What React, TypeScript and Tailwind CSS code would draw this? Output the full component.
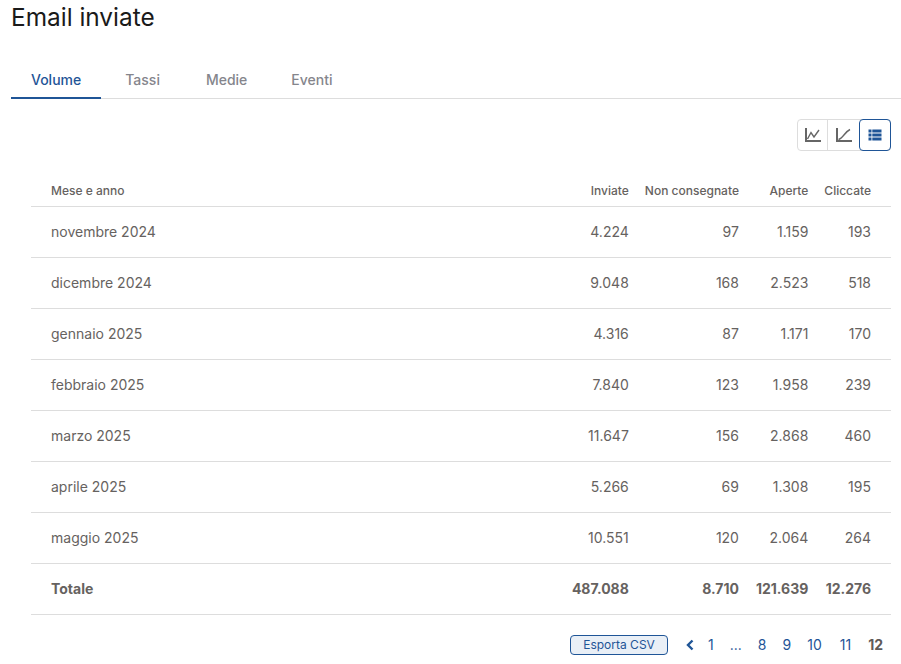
const rows = [
  ['novembre 2024', '4.224', '97', '1.159', '193'],
  ['dicembre 2024', '9.048', '168', '2.523', '518'],
  ['gennaio 2025', '4.316', '87', '1.171', '170'],
  ['febbraio 2025', '7.840', '123', '1.958', '239'],
  ['marzo 2025', '11.647', '156', '2.868', '460'],
  ['aprile 2025', '5.266', '69', '1.308', '195'],
  ['maggio 2025', '10.551', '120', '2.064', '264'],
];

function LineIcon() {
  return (
    <svg width="18" height="18" viewBox="0 0 18 18" fill="none" stroke="#666" strokeWidth="2">
      <path d="M2 2v13h15" />
      <path d="M3.5 13 7 6.5l3 4.5 5-7" strokeWidth="1.4" />
    </svg>
  );
}

function CurveIcon() {
  return (
    <svg width="18" height="18" viewBox="0 0 18 18" fill="none" stroke="#666" strokeWidth="2">
      <path d="M2 2v13h15" />
      <path d="M3.5 13.5C8 12.5 9.5 6 15 3.5" strokeWidth="1.4" />
    </svg>
  );
}

function ListIcon() {
  return (
    <svg width="14" height="12" viewBox="0 0 14 12" fill="#1f5597">
      <path d="M.5.5h3v3h-3zM4.3.5h9.2v3H4.3zM.5 4.5h3v3h-3zM4.3 4.5h9.2v3H4.3zM.5 8.5h3v3h-3zM4.3 8.5h9.2v3H4.3z" />
    </svg>
  );
}

export default function App() {
  return (
    <div className="h-[664px] w-[901px] overflow-hidden bg-white font-['Inter',sans-serif] text-[#666260]">
      <h1 className="pl-[11px] text-[24.4px] leading-[34px] text-[#1a1a1a]">Email inviate</h1>

      <div className="mt-[29px] ml-[11px] flex h-[36px] border-b border-[#dddddd] text-sm font-medium text-[#85858c]">
        <div className="mr-[4px] h-[36px] border-b-2 border-[#1f5597] px-5 pt-[7px] text-[#1f5597]">Volume</div>
        <div className="mr-[6px] h-[36px] px-5 pt-[7px]">Tassi</div>
        <div className="mr-[4px] h-[36px] px-5 pt-[7px]">Medie</div>
        <div className="h-[36px] px-5 pt-[7px]">Eventi</div>
      </div>

      <div className="mt-[20px] mr-[10px] flex justify-end">
        <div className="flex h-[32px] rounded border border-[#dddddd]">
          <div className="flex w-[30px] items-center justify-center border-r border-[#dddddd]">
            <LineIcon />
          </div>
          <div className="flex w-[31px] items-center justify-center">
            <CurveIcon />
          </div>
          <div className="-my-px -mr-px flex w-[32px] items-center justify-center rounded border border-[#1f5597]">
            <ListIcon />
          </div>
        </div>
      </div>

      <div className="mt-[24px] mr-[10px] ml-[31px]">
        <table className="w-full border-collapse">
          <thead>
            <tr className="h-[31px] border-b border-[#dddddd] text-right text-xs whitespace-nowrap">
              <th className="w-full pt-px pl-5 text-left font-medium">Mese e anno</th>
              <th className="px-2 pt-px font-medium">Inviate</th>
              <th className="px-2 pt-px font-medium">Non consegnate</th>
              <th className="pt-px pr-2 pl-[9px] font-medium">Aperte</th>
              <th className="pt-px pr-5 pl-2 font-medium">Cliccate</th>
            </tr>
          </thead>
          <tbody>
            {rows.map((r) => (
              <tr key={r[0]} className="h-[51px] border-b border-[#dddddd] text-right text-sm">
                <td className="pt-px pl-5 text-left">{r[0]}</td>
                <td className="px-2 pt-px">{r[1]}</td>
                <td className="px-2 pt-px">{r[2]}</td>
                <td className="pt-px pr-2 pl-[9px]">{r[3]}</td>
                <td className="pt-px pr-5 pl-2">{r[4]}</td>
              </tr>
            ))}
            <tr className="h-[51px] border-b border-[#dddddd] text-right text-sm font-bold">
              <td className="pt-px pl-5 text-left">Totale</td>
              <td className="px-2 pt-px">487.088</td>
              <td className="px-2 pt-px">8.710</td>
              <td className="pt-px pr-2 pl-[9px]">121.639</td>
              <td className="pt-px pr-5 pl-2">12.276</td>
            </tr>
          </tbody>
        </table>

        <div className="mt-[20px] flex items-center justify-end text-sm text-[#1f5597]">
          <button className="mr-[18px] h-[20px] w-[98px] rounded border border-[#1f5597] bg-[#e9eff6] text-xs text-[#1f5597]">
            Esporta CSV
          </button>
          <svg width="8" height="12" viewBox="0 0 8 12" fill="none" stroke="#1f5597" strokeWidth="2.4" className="mr-[14px]">
            <path d="M6.5 1.5 2 6l4.5 4.5" />
          </svg>
          <span className="mr-[16px]">1</span>
          <span className="mr-[16px]">...</span>
          <span className="mr-[16px]">8</span>
          <span className="mr-[16px]">9</span>
          <span className="mr-[18px]">10</span>
          <span className="mr-[17px]">11</span>
          <span className="mr-[8px] font-bold text-[#5f5a58]">12</span>
        </div>
      </div>
    </div>
  );
}
